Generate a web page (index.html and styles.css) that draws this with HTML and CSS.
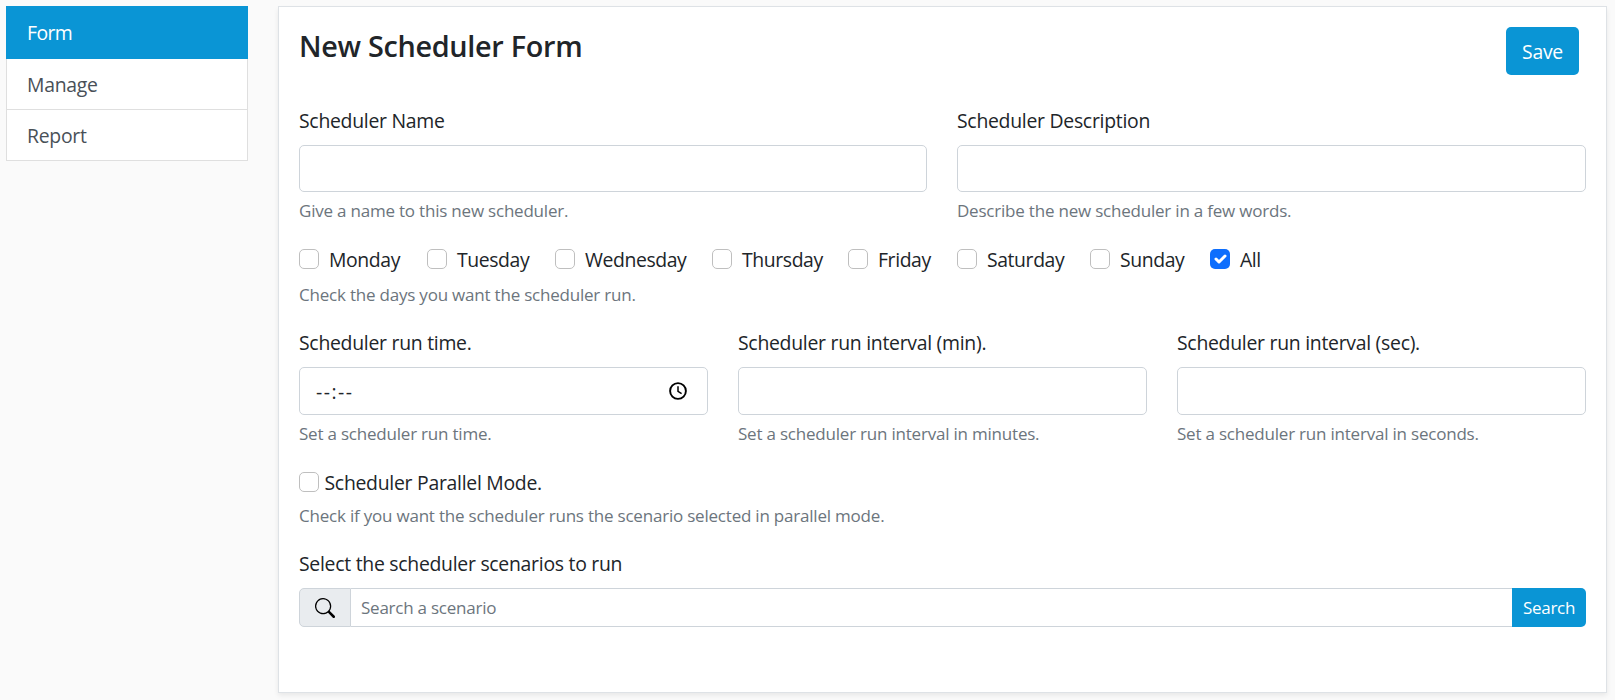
FILE: index.html
```
<!DOCTYPE html>
<html lang="en">
<head>
<meta charset="utf-8">
<title>New Scheduler Form</title>
<link rel="stylesheet" href="styles.css">
</head>
<body>
<div class="layout">
  <nav class="sidebar">
    <a class="nav-item active">Form</a>
    <a class="nav-item">Manage</a>
    <a class="nav-item">Report</a>
  </nav>
  <main class="card">
    <header class="card-head">
      <h1 class="title">New Scheduler Form</h1>
      <button class="btn btn-save" type="button">Save</button>
    </header>

    <section class="row two">
      <div class="field">
        <label class="label" for="name">Scheduler Name</label>
        <input class="control" id="name" type="text">
        <p class="help">Give a name to this new scheduler.</p>
      </div>
      <div class="field">
        <label class="label" for="desc">Scheduler Description</label>
        <input class="control" id="desc" type="text">
        <p class="help">Describe the new scheduler in a few words.</p>
      </div>
    </section>

    <section class="days-block">
      <div class="days">
        <label class="check"><span class="box"></span>Monday</label>
        <label class="check"><span class="box"></span>Tuesday</label>
        <label class="check"><span class="box"></span>Wednesday</label>
        <label class="check"><span class="box"></span>Thursday</label>
        <label class="check"><span class="box"></span>Friday</label>
        <label class="check"><span class="box"></span>Saturday</label>
        <label class="check"><span class="box"></span>Sunday</label>
        <label class="check"><span class="box checked"><svg viewBox="0 0 20 20" width="20" height="20"><path d="M6 10l3 3l6-6" fill="none" stroke="#fff" stroke-width="3" stroke-linecap="round" stroke-linejoin="round"/></svg></span>All</label>
      </div>
      <p class="help">Check the days you want the scheduler run.</p>
    </section>

    <section class="row three">
      <div class="field">
        <span class="label">Scheduler run time.</span>
        <div class="control tall time">
          <span class="time-value">--:--</span>
          <svg class="clock" viewBox="0 0 20 20" width="20" height="20"><circle cx="10" cy="10" r="7.9" fill="none" stroke="#000" stroke-width="1.9"/><path d="M10 5.2v5.1l3.6 2.3" fill="none" stroke="#000" stroke-width="1.5"/></svg>
        </div>
        <p class="help">Set a scheduler run time.</p>
      </div>
      <div class="field">
        <label class="label" for="min">Scheduler run interval (min).</label>
        <input class="control tall" id="min" type="text">
        <p class="help">Set a scheduler run interval in minutes.</p>
      </div>
      <div class="field">
        <label class="label" for="sec">Scheduler run interval (sec).</label>
        <input class="control tall" id="sec" type="text">
        <p class="help">Set a scheduler run interval in seconds.</p>
      </div>
    </section>

    <section class="parallel">
      <label class="check tight"><span class="box"></span>Scheduler Parallel Mode.</label>
      <p class="help">Check if you want the scheduler runs the scenario selected in parallel mode.</p>
    </section>

    <section class="field">
      <label class="label" for="search">Select the scheduler scenarios to run</label>
      <div class="search-group">
        <span class="addon"><svg viewBox="0 0 16 16" width="20" height="20" fill="#000"><path d="M11.742 10.344a6.5 6.5 0 1 0-1.397 1.398h-.001c.03.04.062.078.098.115l3.85 3.85a1 1 0 0 0 1.415-1.414l-3.85-3.85a1.007 1.007 0 0 0-.115-.1zM12 6.5a5.5 5.5 0 1 1-11 0 5.5 5.5 0 0 1 11 0z"/></svg></span>
        <input class="search-input" id="search" type="text" placeholder="Search a scenario">
        <button class="btn btn-search" type="button">Search</button>
      </div>
    </section>
  </main>
</div>
</body>
</html>
```
FILE: styles.css
```
* { box-sizing: border-box; }

body {
  margin: 0;
  background: #fafafa;
  color: #212529;
  font: 400 19.4px/30px "Open Sans", "Noto Sans", sans-serif;
  letter-spacing: -0.014em;
}

.layout {
  display: flex;
  align-items: flex-start;
  gap: 30px;
  padding: 6px 8px 7px 6px;
}

/* Sidebar */
.sidebar {
  display: flex;
  flex-direction: column;
  flex: none;
  width: 242px;
}
.nav-item {
  height: 51px;
  padding: 11px 20px 9px 20px;
  background: #fff;
  border: 1px solid #dfdfdf;
  border-top: 0;
  color: #495057;
}
.nav-item.active {
  height: 53px;
  padding-top: 12px;
  padding-left: 21px;
  background: #0a95d5;
  border: 0;
  color: #fff;
  letter-spacing: -0.03em;
}

/* Card */
.card {
  flex: 1;
  height: 687px;
  padding: 20px;
  background: #fff;
  border: 1px solid #dee2e6;
  box-shadow: 0 2.5px 5px rgba(0, 0, 0, 0.075);
}
.card-head {
  display: flex;
  justify-content: space-between;
  align-items: flex-start;
  height: 78px;
  padding-right: 7px;
}
.title {
  margin: 0;
  padding-top: 1px;
  font-size: 28.8px;
  font-weight: 600;
  line-height: 36px;
  letter-spacing: -0.3px;
}

.btn {
  border: 0;
  background: #0a95d5;
  color: #fff;
  font: inherit;
  letter-spacing: inherit;
}
.btn-save {
  width: 73px;
  height: 48px;
  padding: 2px 0 0;
  border-radius: 5px;
}

.row { display: grid; column-gap: 30px; }
.two { grid-template-columns: 628px 1fr; margin-bottom: 20px; }
.three { grid-template-columns: repeat(3, 1fr); margin-bottom: 20px; }

.label {
  display: block;
  height: 40px;
  padding-top: 1px;
}
.control {
  display: block;
  width: 100%;
  height: 47px;
  background: #fff;
  border: 1px solid #ced4da;
  border-radius: 5px;
}
.control.tall { height: 48px; }
.help {
  margin: 5px 0 0;
  padding-top: 1px;
  color: #6c757d;
  font-size: 17px;
  line-height: 26px;
  letter-spacing: -0.21px;
}

.time {
  display: flex;
  align-items: center;
  justify-content: space-between;
  padding: 0 19px 0 16px;
}
.time-value { letter-spacing: 1.5px; padding-top: 1px; }

/* Checkboxes */
.days-block { margin-bottom: 19px; }
.days-block .help { margin-top: 6px; }
.days {
  display: grid;
  grid-template-columns: 128px 128px 157px 136px 109px 133px 120px auto;
  letter-spacing: -0.4px;
}
.check {
  display: flex;
  align-items: center;
  gap: 10px;
  height: 31px;
  padding-top: 1px;
}
.check.tight { gap: 5.5px; }
.box {
  flex: none;
  width: 20px;
  height: 20px;
  margin-bottom: 2px;
  background: #fff;
  border: 1px solid #bfbfbf;
  border-radius: 5px;
}
.box.checked {
  display: flex;
  border: 0;
  background: #0d6efd;
}
.parallel { margin-bottom: 19px; }
.parallel .help { margin-top: 4px; }

/* Scenario search */
.search-group {
  display: flex;
  height: 39px;
}
.addon {
  display: flex;
  align-items: center;
  justify-content: center;
  width: 52px;
  background: #e9ecef;
  border: 1px solid #ced4da;
  border-radius: 5px 0 0 5px;
}
.search-input {
  flex: 1;
  min-width: 0;
  padding: 1px 11px 0 10px;
  background: #fff;
  border: 1px solid #ced4da;
  border-width: 1px 0;
  border-radius: 0;
  font: inherit;
  font-size: 17px;
  letter-spacing: -0.014em;
}
.search-input::placeholder { color: #6c757d; opacity: 1; }
.btn-search {
  width: 74px;
  padding: 1px 0 0;
  border-radius: 0 5px 5px 0;
  font-size: 17px;
}
```
